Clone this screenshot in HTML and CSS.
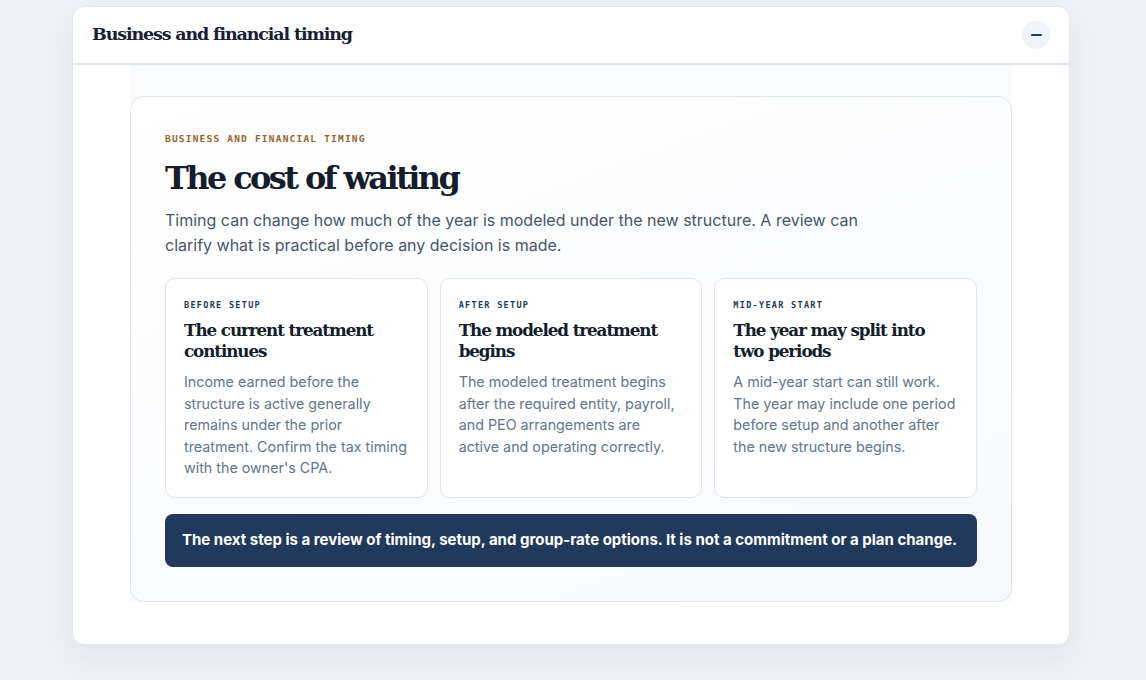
FILE: index.html
```html
<!DOCTYPE html>
<html lang="en">
<head>
<meta charset="utf-8">
<link rel="stylesheet" href="styles.css">
</head>
<body>
<div class="page">
  <section class="panel">
    <header class="panel-head">
      <h2 class="panel-title">Business and financial timing</h2>
      <button class="toggle" aria-label="Collapse"><span class="minus"></span></button>
    </header>
    <div class="panel-body">
      <div class="body-wrap">
        <article class="feature">
          <p class="eyebrow">Business and financial timing</p>
          <h1 class="feature-title">The cost of waiting</h1>
          <p class="lead">Timing can change how much of the year is modeled under the new structure. A review can clarify what is practical before any decision is made.</p>
          <div class="cards">
            <div class="card">
              <p class="card-eyebrow">Before setup</p>
              <h3 class="card-title">The current treatment continues</h3>
              <p class="card-text">Income earned before the structure is active generally remains under the prior treatment. Confirm the tax timing with the owner's CPA.</p>
            </div>
            <div class="card">
              <p class="card-eyebrow">After setup</p>
              <h3 class="card-title">The modeled treatment begins</h3>
              <p class="card-text">The modeled treatment begins after the required entity, payroll, and PEO arrangements are active and operating correctly.</p>
            </div>
            <div class="card">
              <p class="card-eyebrow">Mid-year start</p>
              <h3 class="card-title">The year may split into two periods</h3>
              <p class="card-text">A mid-year start can still work. The year may include one period before setup and another after the new structure begins.</p>
            </div>
          </div>
          <div class="banner">The next step is a review of timing, setup, and group-rate options. It is not a commitment or a plan change.</div>
        </article>
      </div>
    </div>
  </section>
</div>
</body>
</html>
```

FILE: styles.css
```css
* { box-sizing: border-box; }
html, body { margin: 0; padding: 0; }
body {
  background: #eef1f5;
  font-family: Inter, "Liberation Sans", sans-serif;
  width: 1146px;
  height: 680px;
  overflow: hidden;
}
.page {
  padding: 6px 76px 0 72px;
}
.panel {
  width: 998px;
  background: #ffffff;
  border: 1px solid #e1e6ed;
  border-radius: 12px;
  box-shadow: 0 14px 30px rgba(30, 45, 70, 0.06);
}
.panel-head {
  height: 58px;
  display: flex;
  align-items: center;
  justify-content: space-between;
  padding: 0 19px 0 19px;
  border-bottom: 2px solid #e3e7ed;
}
.panel-title {
  margin: 0 0 2px 0;
  font-family: "DejaVu Serif", serif;
  font-weight: 700;
  font-size: 17.5px;
  letter-spacing: -1.15px;
  color: #172033;
}
.toggle {
  width: 28px;
  height: 28px;
  border: none;
  border-radius: 50%;
  background: #f1f4f8;
  display: flex;
  align-items: center;
  justify-content: center;
  padding: 0;
}
.minus {
  display: block;
  width: 11px;
  height: 2px;
  background: #223a5c;
  border-radius: 1px;
}
.panel-body {
  padding: 0 57px 42px 57px;
}
.body-wrap {
  background: #f9fafc;
  padding-top: 31px;
}
.feature {
  border: 1px solid #e1e6ed;
  border-radius: 14px;
  background: linear-gradient(160deg, #ffffff 0%, #f6f8fb 100%);
  padding: 36px 34px 34px 34px;
}
.eyebrow {
  margin: 0;
  font-family: "DejaVu Sans Mono", monospace;
  font-weight: 700;
  font-size: 9.5px;
  letter-spacing: 1.2px;
  text-transform: uppercase;
  color: #94642c;
  line-height: 12px;
}
.feature-title {
  margin: 13px 0 0 0;
  font-family: "DejaVu Serif", serif;
  font-weight: 700;
  font-size: 32px;
  letter-spacing: -2.6px;
  line-height: 40px;
  color: #141d2b;
}
.lead {
  margin: 10px 0 0 0;
  max-width: 720px;
  font-size: 16px;
  line-height: 25px;
  color: #475569;
}
.cards {
  margin-top: 20px;
  display: grid;
  grid-template-columns: repeat(3, 1fr);
  gap: 12px;
}
.card {
  background: #ffffff;
  border: 1px solid #e1e6ed;
  border-radius: 10px;
  padding: 21px 18px 18px 18px;
  min-height: 220px;
}
.card-eyebrow {
  margin: 0;
  font-family: "DejaVu Sans Mono", monospace;
  font-weight: 700;
  font-size: 8.5px;
  letter-spacing: 1.3px;
  text-transform: uppercase;
  color: #233a58;
  line-height: 10px;
}
.card-title {
  margin: 10px 0 0 0;
  font-family: "DejaVu Serif", serif;
  font-weight: 700;
  font-size: 16.8px;
  letter-spacing: -1.1px;
  line-height: 21px;
  color: #141d2b;
}
.card-text {
  margin: 9px 0 0 0;
  font-size: 14.3px;
  line-height: 21.6px;
  color: #64748b;
}
.banner {
  margin-top: 16px;
  background: #213a5c;
  border-radius: 8px;
  color: #ffffff;
  font-weight: 700;
  font-size: 15px;
  line-height: 20px;
  padding: 16px 17px 17px 17px;
}
```
